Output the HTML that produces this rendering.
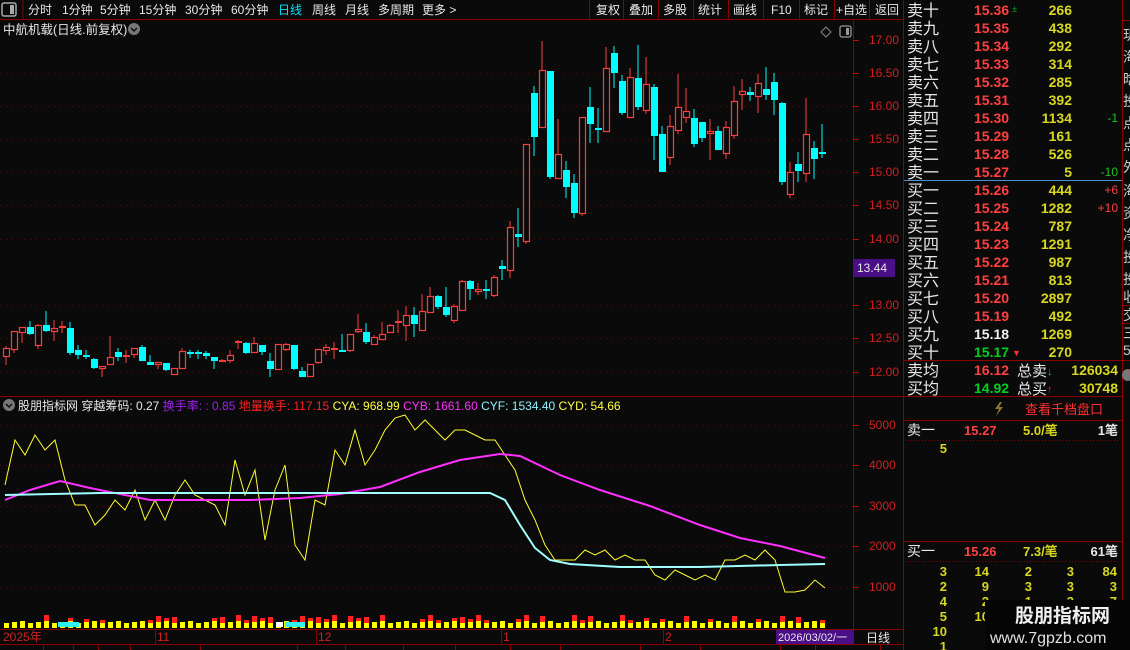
<!DOCTYPE html>
<html><head><meta charset="utf-8"><style>
html,body{margin:0;padding:0;background:#0a0a0a;width:1130px;height:650px;overflow:hidden}
svg{display:block}
text{font-family:"Liberation Sans","Noto Sans CJK SC",sans-serif}
</style></head><body>
<svg id="s" width="1130" height="650" xmlns="http://www.w3.org/2000/svg">
<rect width="1130" height="650" fill="#0a0a0a"/>
<g font-size="12" fill="#e8e8e8">
<rect x="2" y="3" width="14" height="13" fill="none" stroke="#aaa" stroke-width="1.5" rx="2"/><rect x="10" y="5" width="4" height="9" fill="#aaa"/>
<line x1="23" y1="0" x2="23" y2="19" stroke="#8b0000"/>
<text x="28" y="14">分时</text><text x="62" y="14">1分钟</text><text x="100" y="14">5分钟</text><text x="139" y="14">15分钟</text><text x="185" y="14">30分钟</text><text x="231" y="14">60分钟</text><text x="278" y="14" fill="#00e5ff">日线</text><text x="312" y="14">周线</text><text x="345" y="14">月线</text><text x="378" y="14">多周期</text><text x="422" y="14">更多 &gt;</text>
<text x="596" y="14">复权</text><text x="629" y="14">叠加</text><text x="663" y="14">多股</text><text x="698" y="14">统计</text><text x="733" y="14">画线</text><text x="771" y="14">F10</text><text x="804" y="14">标记</text><text x="836" y="14">+自选</text><text x="875" y="14">返回</text>
</g>
<g stroke="#8b0000"><line x1="0" y1="19.5" x2="903" y2="19.5"/>
<line x1="589.5" y1="0" x2="589.5" y2="19"/><line x1="623.5" y1="0" x2="623.5" y2="19"/><line x1="658.5" y1="0" x2="658.5" y2="19"/><line x1="693.5" y1="0" x2="693.5" y2="19"/><line x1="728.5" y1="0" x2="728.5" y2="19"/><line x1="763.5" y1="0" x2="763.5" y2="19"/><line x1="799.5" y1="0" x2="799.5" y2="19"/><line x1="834.5" y1="0" x2="834.5" y2="19"/><line x1="869.5" y1="0" x2="869.5" y2="19"/>
<line x1="903.5" y1="0" x2="903.5" y2="650"/><line x1="1122.5" y1="0" x2="1122.5" y2="650"/>
<line x1="853.5" y1="20" x2="853.5" y2="645"/>
<line x1="0" y1="396.5" x2="903" y2="396.5"/>
<line x1="0" y1="629.5" x2="903" y2="629.5"/><line x1="0" y1="644.5" x2="903" y2="644.5"/>
</g>
<g stroke="#8b0000"><line x1="43.5" y1="645" x2="43.5" y2="650"/><line x1="73.5" y1="645" x2="73.5" y2="650"/><line x1="98.5" y1="645" x2="98.5" y2="650"/><line x1="130.5" y1="645" x2="130.5" y2="650"/><line x1="200.5" y1="645" x2="200.5" y2="650"/><line x1="297.5" y1="645" x2="297.5" y2="650"/><line x1="345.5" y1="645" x2="345.5" y2="650"/><line x1="403.5" y1="645" x2="403.5" y2="650"/><line x1="455.5" y1="645" x2="455.5" y2="650"/><line x1="510.5" y1="645" x2="510.5" y2="650"/><line x1="560.5" y1="645" x2="560.5" y2="650"/><line x1="640.5" y1="645" x2="640.5" y2="650"/><line x1="700.5" y1="645" x2="700.5" y2="650"/><line x1="780.5" y1="645" x2="780.5" y2="650"/><line x1="815.5" y1="645" x2="815.5" y2="650"/><line x1="880.5" y1="645" x2="880.5" y2="650"/></g>
<text x="3" y="34" font-size="12.5" fill="#e8e8e8">中航机载(日线.前复权)</text>
<circle cx="134" cy="29" r="6" fill="#777"/><path d="M131 28l3 3 3-3" stroke="#111" stroke-width="1.5" fill="none"/>
<path d="M826 27l5 5-5 5-5-5z" fill="none" stroke="#888"/><rect x="840" y="26" width="11" height="11" rx="2" fill="none" stroke="#999" stroke-width="1.3"/><rect x="846" y="28" width="3" height="7" fill="#999"/>
<g id="grid" stroke="#5a1010" stroke-dasharray="1,5"></g>
<g id="axis" font-size="12" fill="#d02020"></g>
<rect x="853" y="259" width="42" height="18" fill="#4a0f88"/><text x="857" y="272" font-size="12" fill="#e8e8e8">13.44</text>
<g id="candles"></g>
<circle cx="9" cy="405" r="6" fill="#777"/><path d="M6 404l3 3 3-3" stroke="#111" stroke-width="1.5" fill="none"/>
<text y="410" font-size="12"><tspan x="18" fill="#e8e8e8">股朋指标网 穿越筹码: 0.27 </tspan><tspan fill="#a020f0">换手率: : 0.85 </tspan><tspan fill="#ff2020">地量换手: 117.15 </tspan><tspan fill="#ffff40">CYA: 968.99 </tspan><tspan fill="#ff30ff">CYB: 1661.60 </tspan><tspan fill="#90f0ff">CYF: 1534.40 </tspan><tspan fill="#ffff40">CYD: 54.66</tspan></text>
<g id="ind"></g>
<g font-size="12" fill="#d02020">
<text x="3" y="641">2025年</text><text x="157" y="641">11</text><text x="318" y="641">12</text><text x="503" y="641">1</text><text x="665" y="641">2</text>
</g>
<g stroke="#8b0000"><line x1="155.5" y1="630" x2="155.5" y2="644"/><line x1="316.5" y1="630" x2="316.5" y2="644"/><line x1="501.5" y1="630" x2="501.5" y2="644"/><line x1="663.5" y1="630" x2="663.5" y2="644"/></g>
<rect x="776" y="630" width="77" height="14" fill="#4a0f88"/><text x="778" y="641" font-size="11" fill="#e8e8e8">2026/03/02/一</text>
<text x="866" y="642" font-size="12" fill="#e8e8e8">日线</text>
<g id="ob"></g>
<line x1="904" y1="180.5" x2="1122" y2="180.5" stroke="#4a8fd0"/>
<g stroke="#8b0000"><line x1="904" y1="360.5" x2="1122" y2="360.5"/><line x1="904" y1="396.5" x2="1122" y2="396.5"/><line x1="904" y1="420.5" x2="1122" y2="420.5"/><line x1="904" y1="541.5" x2="1122" y2="541.5"/></g>
<g stroke="#8b0000" stroke-dasharray="1,2"><line x1="907" y1="440.5" x2="1118" y2="440.5"/><line x1="907" y1="561.5" x2="1118" y2="561.5"/></g>
<path d="M1000 402l-5 7h4l-3 7 7-9h-4l3-5z" fill="#8a7a30"/>
<text x="1025" y="414" font-size="13" fill="#ff3030">查看千档盘口</text>
<g font-size="13" font-weight="bold">
<text x="907" y="435" fill="#e8e8e8" font-weight="normal" font-size="14">卖一</text><text x="964" y="435" fill="#ff4040">15.27</text><text x="1023" y="435" fill="#d8d820">5.0/笔</text><text x="1118" y="435" fill="#e8e8e8" text-anchor="end">1笔</text>
<text x="947" y="453" fill="#d8d820" text-anchor="end">5</text>
<text x="907" y="556" fill="#e8e8e8" font-weight="normal" font-size="14">买一</text><text x="964" y="556" fill="#ff4040">15.26</text><text x="1023" y="556" fill="#d8d820">7.3/笔</text><text x="1118" y="556" fill="#e8e8e8" text-anchor="end">61笔</text>
</g>
<g id="ticks" font-size="13" font-weight="bold" fill="#d8d820" text-anchor="end"></g>
<g font-size="14" fill="#ccc"><text x="1123" y="40">玥</text><text x="1123" y="62">海</text><text x="1123" y="84">晗</text><text x="1123" y="106">投</text><text x="1123" y="128">点</text><text x="1123" y="150">点</text><text x="1123" y="172">外</text><text x="1123" y="196">海</text><text x="1123" y="218">资</text><text x="1123" y="240">净</text><text x="1123" y="262">投</text><text x="1123" y="284">投</text><text x="1123" y="302">收</text><text x="1123" y="320">交</text><text x="1123" y="338">三</text><text x="1123" y="355">5</text></g>
<g stroke="#8b0000"><line x1="1122" y1="20.5" x2="1130" y2="20.5"/><line x1="1122" y1="305.5" x2="1130" y2="305.5"/><line x1="1122" y1="323.5" x2="1130" y2="323.5"/><line x1="1122" y1="360.5" x2="1130" y2="360.5"/></g>
<circle cx="1128" cy="375" r="6" fill="#777"/>
<rect x="985" y="600" width="145" height="50" fill="#050505"/>
<text x="1015" y="622" font-size="19" font-weight="bold" fill="#f0f0f0">股朋指标网</text>
<text x="990" y="643" font-size="16" fill="#e0e0e0">www.7gpzb.com</text>
</svg>
<script>
var NS="http://www.w3.org/2000/svg";
function el(p,t,a,txt){var e=document.createElementNS(NS,t);for(var k in a)e.setAttribute(k,a[k]);if(txt!==undefined)e.textContent=txt;document.getElementById(p).appendChild(e);return e;}
var lv=[[40,"17.00"],[73,"16.50"],[106,"16.00"],[139,"15.50"],[172,"15.00"],[205,"14.50"],[239,"14.00"],[305,"13.00"],[338,"12.50"],[372,"12.00"]];
lv.forEach(function(l){if(l[0]!=40)el("grid","line",{x1:0,y1:l[0]+0.5,x2:853,y2:l[0]+0.5});el("axis","line",{x1:853,y1:l[0]+0.5,x2:859,y2:l[0]+0.5,stroke:"#b01010"});el("axis","text",{x:869,y:l[0]+4},l[1]);});
[[425,"5000"],[465,"4000"],[506,"3000"],[546,"2000"],[587,"1000"]].forEach(function(l){el("grid","line",{x1:0,y1:l[0]+0.5,x2:853,y2:l[0]+0.5});el("axis","line",{x1:853,y1:l[0]+0.5,x2:859,y2:l[0]+0.5,stroke:"#b01010"});el("axis","text",{x:869,y:l[0]+4},l[1]);});
var C=[[0,"r",348,357,346,365],[1,"r",331,350,331,353],[2,"r",327,333,327,343],[3,"c",327,334,321,335],[4,"r",325,346,324,349],[5,"c",325,331,311,332],[6,"r",328,332,320,341],[7,"r",326,327,321,333],[8,"c",328,353,322,355],[9,"c",350,355,345,359],[10,"c",355,357,350,359],[11,"c",359,368,358,369],[12,"r",366,369,366,377],[13,"r",357,365,336,365],[14,"c",352,357,348,361],[15,"r",355,357,350,363],[16,"r",348,355,348,358],[17,"c",347,361,345,361],[18,"c",362,365,355,365],[19,"r",362,365,362,369],[20,"c",363,370,363,371],[21,"r",368,375,368,375],[22,"r",351,369,348,369],[23,"c",352,353,350,358],[24,"c",352,353,350,359],[25,"c",353,356,351,359],[26,"c",357,361,357,369],[27,"r",360,362,359,362],[28,"r",355,361,350,363],[29,"r",341,342,340,349],[30,"c",343,353,342,354],[31,"r",343,353,337,353],[32,"c",345,352,345,355],[33,"c",361,369,353,377],[34,"r",344,370,344,370],[35,"r",344,350,343,351],[36,"c",345,369,345,370],[37,"c",371,377,367,377],[38,"r",364,377,364,377],[39,"r",349,363,349,364],[40,"r",347,351,344,355],[41,"r",348,349,342,359],[42,"c",350,351,334,351],[43,"r",334,351,334,352],[44,"r",329,332,314,333],[45,"c",332,342,323,344],[46,"r",337,345,335,345],[47,"r",334,340,322,340],[48,"r",325,333,324,333],[49,"r",321,322,310,333],[50,"r",315,326,306,341],[51,"c",315,324,307,337],[52,"r",311,331,294,331],[53,"r",296,313,287,313],[54,"c",296,307,295,309],[55,"c",307,315,287,317],[56,"r",306,321,304,323],[57,"r",281,311,280,311],[58,"c",281,289,280,300],[59,"r",289,292,283,295],[60,"c",289,290,280,299],[61,"r",277,296,275,297],[62,"c",266,269,260,280],[63,"r",227,271,221,278],[64,"c",234,237,208,247],[65,"r",144,242,144,244],[66,"c",93,137,86,156],[67,"r",70,128,41,128],[68,"c",71,177,71,179],[69,"r",154,179,119,179],[70,"c",170,187,161,198],[71,"c",183,213,174,218],[72,"r",117,214,117,216],[73,"c",107,124,87,143],[74,"c",128,130,108,143],[75,"r",68,132,47,132],[76,"c",53,73,46,88],[77,"c",81,113,75,115],[78,"r",77,118,68,118],[79,"c",78,107,45,110],[80,"r",84,111,57,114],[81,"c",87,136,84,160],[82,"c",134,172,126,172],[83,"r",126,158,115,165],[84,"r",107,131,74,134],[85,"r",111,118,88,123],[86,"c",118,144,109,147],[87,"c",122,138,122,142],[88,"r",131,134,119,160],[89,"c",131,150,126,150],[90,"r",127,154,121,159],[91,"r",101,136,86,139],[92,"r",91,95,79,110],[93,"c",92,95,87,101],[94,"r",83,97,74,113],[95,"c",89,95,67,100],[96,"c",82,100,73,115],[97,"c",103,182,102,185],[98,"r",172,195,162,198],[99,"c",164,171,152,182],[100,"r",134,174,98,182],[101,"c",148,159,141,179],[102,"c",152,153,124,158]];
C.forEach(function(d){var x=6+8*d[0],col=d[1]=="r"?"#ff3c3c":"#00ffff";
el("candles","line",{x1:x,y1:d[4],x2:x,y2:d[5],stroke:col,"stroke-width":1});
var h=Math.max(d[3]-d[2],1);
if(d[1]=="r"){if(h<=2)el("candles","rect",{x:x-3,y:d[2],width:7,height:2,fill:col});else el("candles","rect",{x:x-2.5,y:d[2]+0.5,width:6,height:h-1,fill:"#0a0a0a",stroke:col,"stroke-width":1.2});}
else el("candles","rect",{x:x-3,y:d[2],width:7,height:Math.max(h,2),fill:col});});
function poly(pts,col,w){el("ind","polyline",{points:pts.map(function(p){return p.join(",")}).join(" "),fill:"none",stroke:col,"stroke-width":w});}
var Y=[[5,485],[15,440],[25,455],[35,435],[45,450],[55,440],[65,480],[75,505],[85,505],[95,525],[105,515],[115,500],[125,510],[135,490],[145,520],[155,500],[165,520],[175,495],[185,480],[195,495],[205,500],[215,505],[225,525],[235,460],[245,495],[255,470],[265,540],[275,490],[285,465],[295,545],[305,560],[315,500],[325,505],[335,450],[345,465],[355,430],[365,465],[375,450],[385,430],[395,418],[405,415],[415,430],[425,420],[435,430],[445,440],[455,430],[465,430],[475,435],[485,440],[495,440],[505,455],[515,470],[525,500],[535,520],[545,545],[555,560],[565,560],[575,560],[585,550],[595,555],[605,550],[615,560],[625,555],[635,560],[645,560],[655,575],[665,580],[675,570],[685,575],[695,580],[705,575],[715,580],[725,560],[735,560],[745,555],[755,560],[765,550],[775,560],[785,592],[795,592],[805,590],[815,580],[825,588]];
poly(Y,"#ffff30",1);
poly([[5,500],[30,490],[60,481],[90,488],[150,500],[250,500],[300,498],[340,494],[380,487],[420,472],[460,460],[500,454],[520,456],[560,475],[600,490],[650,506],[700,525],[740,538],[780,546],[825,558]],"#ff30ff",2);
poly([[5,495],[100,493],[300,493],[490,493],[505,500],[520,525],[535,548],[550,560],[570,564],[620,567],[700,567],[780,565],[825,564]],"#a0ffff",2);
var red=[5,8,10,12,18,19,20,21,26,27,29,30,31,32,33,36,37,38,39,40,41,43,44,45,47,52,53,54,56,57,58,59,60,64,65,67,71,72,73,77,78,80,82,85,88,91,94,97,99,102];
for(var i=0;i<103;i++){var x=6+8*i;var h=5+((i*7)%3);
el("ind","rect",{x:x-2,y:628-h,width:5,height:h,fill:"#ffff00"});
if(red.indexOf(i)>=0){var rh=3+((i*3)%6);el("ind","rect",{x:x-2,y:628-h-rh,width:5,height:rh,fill:"#ff2020"});}}
el("ind","rect",{x:58,y:622,width:21,height:5,fill:"#30f0f0"});el("ind","rect",{x:276,y:622,width:7,height:5,fill:"#fff"});el("ind","rect",{x:285,y:622,width:20,height:5,fill:"#30f0f0"});
var sell=[["卖十","15.36","266",""],["卖九","15.35","438",""],["卖八","15.34","292",""],["卖七","15.33","314",""],["卖六","15.32","285",""],["卖五","15.31","392",""],["卖四","15.30","1134","-1"],["卖三","15.29","161",""],["卖二","15.28","526",""],["卖一","15.27","5","-10"]];
var buy=[["买一","15.26","444","+6"],["买二","15.25","1282","+10"],["买三","15.24","787",""],["买四","15.23","1291",""],["买五","15.22","987",""],["买六","15.21","813",""],["买七","15.20","2897",""],["买八","15.19","492",""],["买九","15.18","1269",""],["买十","15.17","270",""]];
function row(r,y,pc,cc){el("ob","text",{x:907,y:y+7,"font-size":16,fill:"#e8e8e8"},r[0]);el("ob","text",{x:974,y:y+6,"font-size":14,"font-weight":"bold",fill:pc},r[1]);if(r[2])el("ob","text",{x:1072,y:y+6,"font-size":14,"font-weight":"bold",fill:"#d8d820","text-anchor":"end"},r[2]);if(r[3])el("ob","text",{x:1118,y:y+5,"font-size":12,fill:cc,"text-anchor":"end"},r[3]);}
sell.forEach(function(r,k){row(r,9+k*18,"#ff4040","#20c020");});
buy.forEach(function(r,k){row(r,189+k*18,k==8?"#f0f0f0":(k==9?"#00d020":"#ff4040"),"#ff4040");});
el("ob","text",{x:1012,y:12,"font-size":9,fill:"#20a020"},"±");
el("ob","text",{x:1012,y:356,"font-size":9,fill:"#ff3030"},"▼");
row(["卖均","16.12","",""],369,"#ff4040");row(["买均","14.92","",""],387,"#00d020");
el("ob","text",{x:1017,y:376,"font-size":15,fill:"#e8e8e8"},"总卖");el("ob","text",{x:1047,y:375,"font-size":11,fill:"#20c020"},"↓");
el("ob","text",{x:1017,y:394,"font-size":15,fill:"#e8e8e8"},"总买");el("ob","text",{x:1047,y:393,"font-size":11,fill:"#ff2020"},"↑");
el("ob","text",{x:1118,y:375,"font-size":14,"font-weight":"bold",fill:"#d8d820","text-anchor":"end"},"126034");
el("ob","text",{x:1118,y:393,"font-size":14,"font-weight":"bold",fill:"#d8d820","text-anchor":"end"},"30748");
var T=[["3","14","2","3","84"],["2","9","3","3","3"],["4","2","1","3","7"],["5","10","","",""],["10","","","",""],["1","","","",""]];
var cx=[947,989,1032,1074,1117];
T.forEach(function(r,k){r.forEach(function(v,j){if(v)el("ticks","text",{x:cx[j],y:576+k*15},v);});});
</script>
</body></html>
